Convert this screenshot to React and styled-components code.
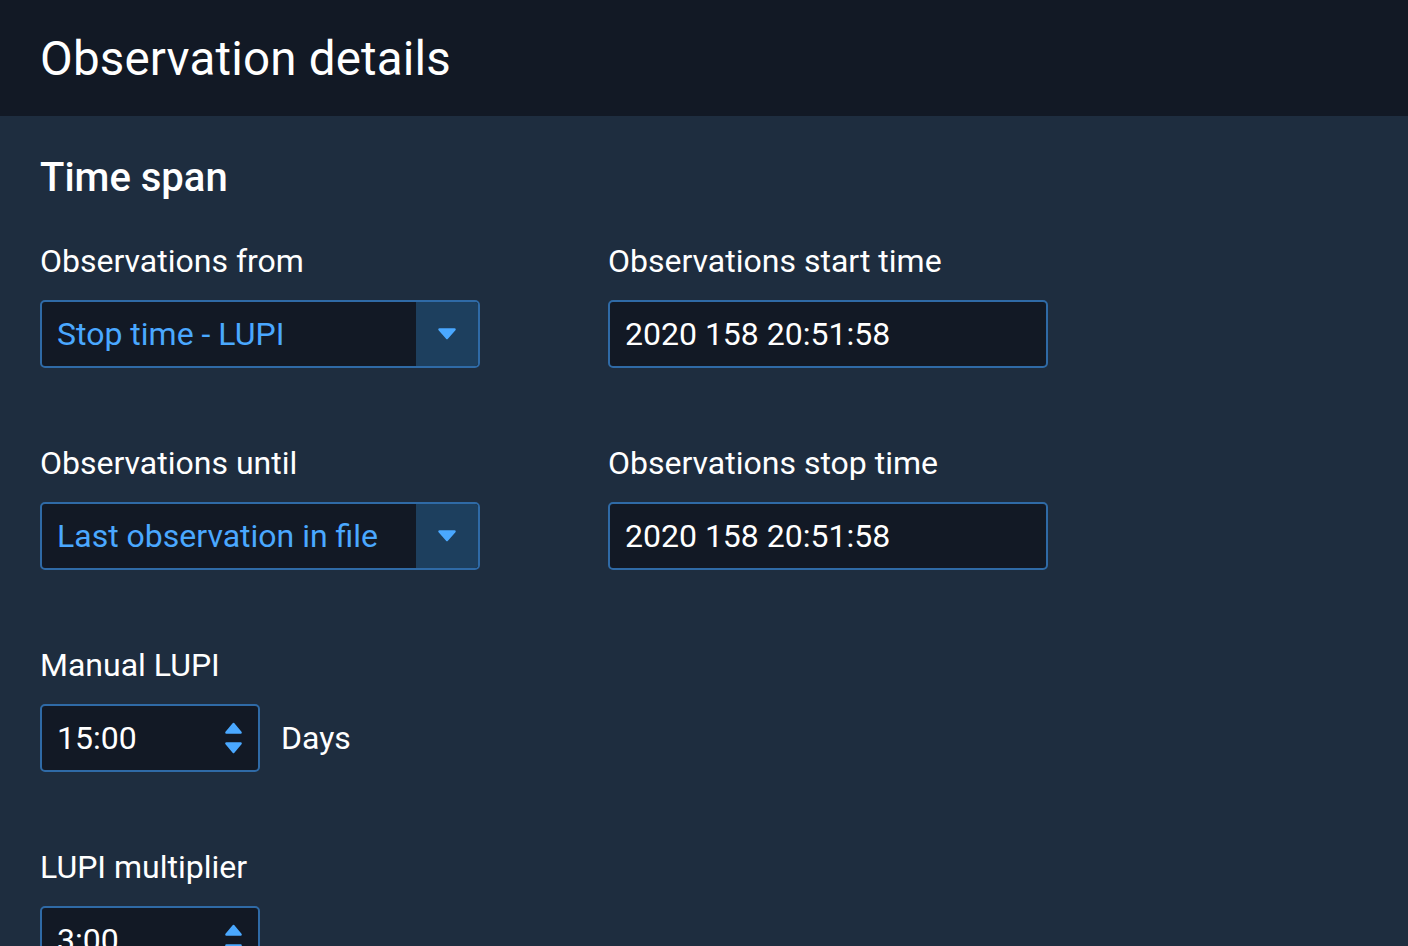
import React from "react";
import styled, { createGlobalStyle } from "styled-components";

const GlobalStyle = createGlobalStyle`
  html, body {
    margin: 0;
    padding: 0;
    background: #1e2d3f;
    font-family: Roboto, "Liberation Sans", sans-serif;
    color: #ffffff;
  }
  * { box-sizing: border-box; }
`;

const Page = styled.div`
  min-height: 946px;
  background: #1e2d3f;
`;

const Header = styled.header`
  height: 116px;
  background: #121925;
  display: flex;
  align-items: center;
  padding: 0 40px;
`;

const Title = styled.h1`
  margin: 0;
  font-size: 47.5px;
  font-weight: 400;
  line-height: 56px;
  letter-spacing: 0.2px;
  padding-top: 2px;
`;

const Content = styled.main`
  padding: 40px 40px 0;
`;

const SectionTitle = styled.h2`
  margin: 0 0 43px;
  font-size: 40px;
  font-weight: 500;
  line-height: 44px;
`;

const Grid = styled.div`
  display: grid;
  grid-template-columns: 440px 440px;
  column-gap: 128px;
  row-gap: 77px;
`;

const Field = styled.div`
  display: flex;
  flex-direction: column;
  grid-column: ${(p) => (p.$full ? "1 / -1" : "auto")};
`;

const Label = styled.label`
  font-size: 32px;
  line-height: 36px;
  margin-bottom: 21px;
  color: #ffffff;
  white-space: nowrap;
`;

const Control = styled.div`
  display: flex;
  align-items: stretch;
  width: ${(p) => p.$width || "440px"};
  height: 68px;
  border: 2px solid #2f6aa6;
  border-radius: 5px;
  background: #121925;
  overflow: hidden;
`;

const Value = styled.div`
  flex: 1;
  display: flex;
  align-items: center;
  padding-left: 15px;
  font-size: 32px;
  color: ${(p) => (p.$accent ? "#4aa8ff" : "#ffffff")};
  white-space: nowrap;
`;

const DropButton = styled.div`
  width: 62px;
  background: #1d3f5e;
  display: flex;
  align-items: center;
  justify-content: center;
`;

const Spinner = styled.div`
  width: 50px;
  display: flex;
  flex-direction: column;
  align-items: center;
  justify-content: center;
  gap: 8px;
`;

const Inline = styled.div`
  display: flex;
  align-items: center;
  gap: 21px;
`;

const Unit = styled.span`
  font-size: 32px;
  color: #ffffff;
`;

function Caret({ up, w = 20, h = 12 }) {
  return (
    <svg
      width={w}
      height={h}
      viewBox="0 0 20 12"
      preserveAspectRatio="none"
      style={{ transform: up ? "rotate(180deg)" : "none", display: "block" }}
    >
      <path
        d="M2.5 1.5 H17.5 L10 10 Z"
        fill="#4aa8ff"
        stroke="#4aa8ff"
        strokeWidth="2.5"
        strokeLinejoin="round"
      />
    </svg>
  );
}

function Select({ value }) {
  return (
    <Control>
      <Value $accent>{value}</Value>
      <DropButton>
        <Caret />
      </DropButton>
    </Control>
  );
}

function NumberInput({ value }) {
  return (
    <Control $width="220px">
      <Value>{value}</Value>
      <Spinner>
        <Caret up w={19} h={12} />
        <Caret w={19} h={12} />
      </Spinner>
    </Control>
  );
}

export default function App() {
  return (
    <Page>
      <GlobalStyle />
      <Header>
        <Title>Observation details</Title>
      </Header>
      <Content>
        <SectionTitle>Time span</SectionTitle>
        <Grid>
          <Field>
            <Label>Observations from</Label>
            <Select value="Stop time - LUPI" />
          </Field>
          <Field>
            <Label>Observations start time</Label>
            <Control>
              <Value>2020 158 20:51:58</Value>
            </Control>
          </Field>
          <Field>
            <Label>Observations until</Label>
            <Select value="Last observation in file" />
          </Field>
          <Field>
            <Label>Observations stop time</Label>
            <Control>
              <Value>2020 158 20:51:58</Value>
            </Control>
          </Field>
          <Field $full>
            <Label>Manual LUPI</Label>
            <Inline>
              <NumberInput value="15:00" />
              <Unit>Days</Unit>
            </Inline>
          </Field>
          <Field $full>
            <Label>LUPI multiplier</Label>
            <Inline>
              <NumberInput value="3:00" />
            </Inline>
          </Field>
        </Grid>
      </Content>
    </Page>
  );
}
